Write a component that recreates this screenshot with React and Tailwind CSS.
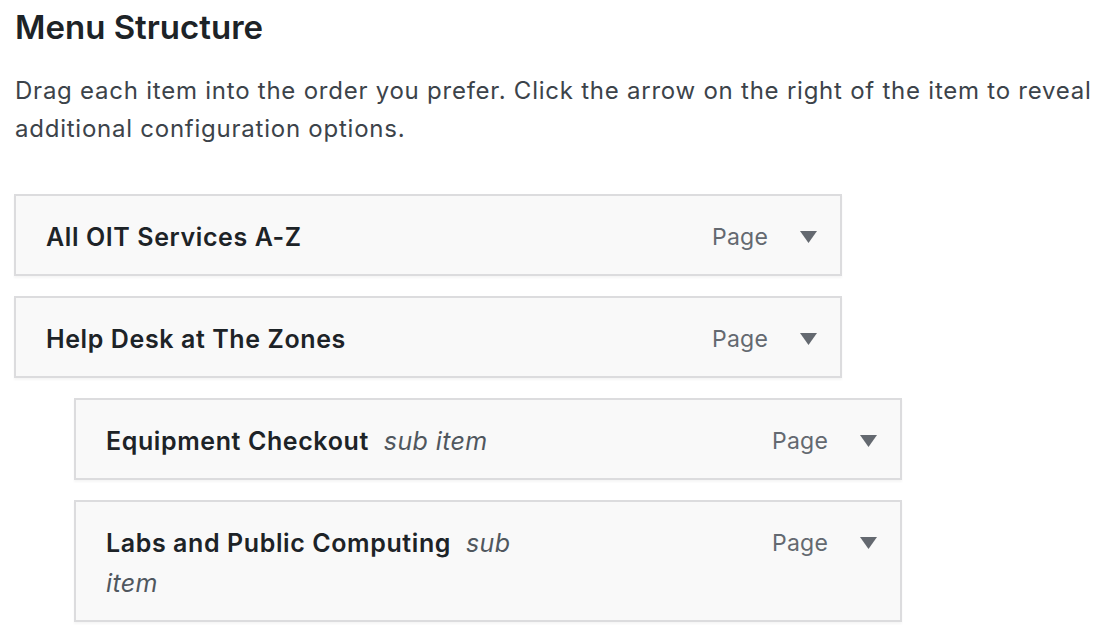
import React from "react";

const Arrow = () => (
  <svg width="17" height="12" viewBox="0 0 17 12" className="shrink-0">
    <polygon points="0,0 17,0 8.5,12" fill="#646970" />
  </svg>
);

const Item = ({ title, sub, indent }) => (
  <div
    className={`flex items-start justify-between w-[828px] border-2 border-[#dcdcde] bg-[#f9f9f9] shadow-[0_2px_2px_rgba(0,0,0,0.04)] pl-[30px] pr-[23px] pt-[21px] pb-[17px] ${indent ? "ml-[60px]" : ""}`}
  >
    <div className="w-[420px] text-[25px] leading-[40px]">
      <span className="font-semibold text-[#1d2327] tracking-[0.6px]">{title}</span>
      {sub && <span className="italic text-[#50575e] tracking-[0.4px] ml-[15px]">sub item</span>}
    </div>
    <div className="flex items-center h-[40px]">
      <span className="text-[23px] text-[#646970] tracking-[0.2px] mr-[32px]">Page</span>
      <Arrow />
    </div>
  </div>
);

export default function App() {
  return (
    <div
      className="w-[1112px] h-[636px] bg-white overflow-hidden pl-[15px]"
      style={{ fontFamily: "Inter, 'Noto Sans', sans-serif" }}
    >
      <h2 className="text-[33px] leading-[40px] font-semibold text-[#1d2327] pt-[7px]">
        Menu Structure
      </h2>
      <p className="text-[24px] leading-[38px] text-[#3c434a] tracking-[0.76px] mt-[25px]">
        Drag each item into the order you prefer. Click the arrow on the right of the item to reveal additional configuration options.
      </p>
      <div className="flex flex-col gap-[20px] mt-[46px] -ml-[1px]">
        <Item title="All OIT Services A-Z" />
        <Item title="Help Desk at The Zones" />
        <Item title="Equipment Checkout" sub indent />
        <Item title="Labs and Public Computing" sub indent />
      </div>
    </div>
  );
}
